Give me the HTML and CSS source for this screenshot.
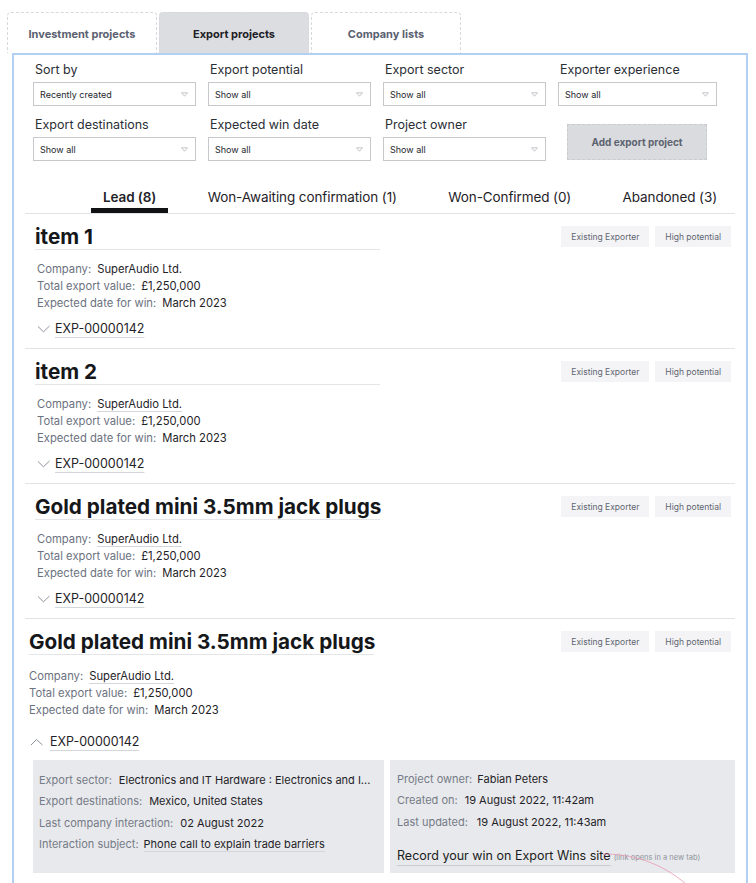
FILE: index.html
```html
<!DOCTYPE html>
<html lang="en">
<head>
<meta charset="utf-8">
<title>Export projects</title>
<link rel="stylesheet" href="styles.css">
</head>
<body>
<div class="page">
  <nav class="top-tabs">
    <a class="top-tab">Investment projects</a>
    <a class="top-tab active">Export projects</a>
    <a class="top-tab">Company lists</a>
  </nav>
  <main class="panel">
    <div class="filters">
      <div class="field">
        <label>Sort by</label>
        <div class="select"><span>Recently created</span><svg class="caret" width="7" height="5" viewBox="0 0 7 5"><path d="M0.5 0.8 H6.5 L3.5 4.2 Z" fill="none" stroke="#b4b7bc" stroke-width="0.8"/></svg></div>
      </div>
      <div class="field">
        <label>Export potential</label>
        <div class="select"><span>Show all</span><svg class="caret" width="7" height="5" viewBox="0 0 7 5"><path d="M0.5 0.8 H6.5 L3.5 4.2 Z" fill="none" stroke="#b4b7bc" stroke-width="0.8"/></svg></div>
      </div>
      <div class="field">
        <label>Export sector</label>
        <div class="select"><span>Show all</span><svg class="caret" width="7" height="5" viewBox="0 0 7 5"><path d="M0.5 0.8 H6.5 L3.5 4.2 Z" fill="none" stroke="#b4b7bc" stroke-width="0.8"/></svg></div>
      </div>
      <div class="field">
        <label>Exporter experience</label>
        <div class="select narrow"><span>Show all</span><svg class="caret" width="7" height="5" viewBox="0 0 7 5"><path d="M0.5 0.8 H6.5 L3.5 4.2 Z" fill="none" stroke="#b4b7bc" stroke-width="0.8"/></svg></div>
      </div>
      <div class="field">
        <label>Export destinations</label>
        <div class="select"><span>Show all</span><svg class="caret" width="7" height="5" viewBox="0 0 7 5"><path d="M0.5 0.8 H6.5 L3.5 4.2 Z" fill="none" stroke="#b4b7bc" stroke-width="0.8"/></svg></div>
      </div>
      <div class="field">
        <label>Expected win date</label>
        <div class="select"><span>Show all</span><svg class="caret" width="7" height="5" viewBox="0 0 7 5"><path d="M0.5 0.8 H6.5 L3.5 4.2 Z" fill="none" stroke="#b4b7bc" stroke-width="0.8"/></svg></div>
      </div>
      <div class="field">
        <label>Project owner</label>
        <div class="select"><span>Show all</span><svg class="caret" width="7" height="5" viewBox="0 0 7 5"><path d="M0.5 0.8 H6.5 L3.5 4.2 Z" fill="none" stroke="#b4b7bc" stroke-width="0.8"/></svg></div>
      </div>
      <div class="field action">
        <button class="add-btn">Add export project</button>
      </div>
    </div>

    <div class="status-tabs">
      <a class="status-tab active">Lead (8)</a>
      <a class="status-tab">Won-Awaiting confirmation (1)</a>
      <a class="status-tab">Won-Confirmed (0)</a>
      <a class="status-tab">Abandoned (3)</a>
    </div>

    <ul class="projects">
      <li class="project">
        <div class="project-head">
          <h2 class="title">item 1</h2>
          <div class="badges"><span class="badge">Existing Exporter</span><span class="badge">High potential</span></div>
        </div>
        <div class="meta">
          <div class="row"><span class="k">Company:</span><span class="v">SuperAudio Ltd.</span></div>
          <div class="row"><span class="k">Total export value:</span><span class="v">£1,250,000</span></div>
          <div class="row"><span class="k">Expected date for win:</span><span class="v">March 2023</span></div>
        </div>
        <div class="toggle">
          <svg width="14" height="8" viewBox="0 0 14 8"><path d="M1 1.5 L6.5 6.8 L12.5 1" fill="none" stroke="#8d929a" stroke-width="1"/></svg>
          <a class="exp">EXP-00000142</a>
        </div>
      </li>

      <li class="project">
        <div class="project-head">
          <h2 class="title">item 2</h2>
          <div class="badges"><span class="badge">Existing Exporter</span><span class="badge">High potential</span></div>
        </div>
        <div class="meta">
          <div class="row"><span class="k">Company:</span><span class="v link">SuperAudio Ltd.</span></div>
          <div class="row"><span class="k">Total export value:</span><span class="v">£1,250,000</span></div>
          <div class="row"><span class="k">Expected date for win:</span><span class="v">March 2023</span></div>
        </div>
        <div class="toggle">
          <svg width="14" height="8" viewBox="0 0 14 8"><path d="M1 1.5 L6.5 6.8 L12.5 1" fill="none" stroke="#8d929a" stroke-width="1"/></svg>
          <a class="exp">EXP-00000142</a>
        </div>
      </li>

      <li class="project">
        <div class="project-head">
          <h2 class="title">Gold plated mini 3.5mm jack plugs</h2>
          <div class="badges"><span class="badge">Existing Exporter</span><span class="badge">High potential</span></div>
        </div>
        <div class="meta">
          <div class="row"><span class="k">Company:</span><span class="v link">SuperAudio Ltd.</span></div>
          <div class="row"><span class="k">Total export value:</span><span class="v">£1,250,000</span></div>
          <div class="row"><span class="k">Expected date for win:</span><span class="v">March 2023</span></div>
        </div>
        <div class="toggle">
          <svg width="14" height="8" viewBox="0 0 14 8"><path d="M1 1.5 L6.5 6.8 L12.5 1" fill="none" stroke="#8d929a" stroke-width="1"/></svg>
          <a class="exp">EXP-00000142</a>
        </div>
      </li>

      <li class="project expanded">
        <div class="project-head">
          <h2 class="title">Gold plated mini 3.5mm jack plugs</h2>
          <div class="badges"><span class="badge">Existing Exporter</span><span class="badge">High potential</span></div>
        </div>
        <div class="meta">
          <div class="row"><span class="k">Company:</span><span class="v link">SuperAudio Ltd.</span></div>
          <div class="row"><span class="k">Total export value:</span><span class="v">£1,250,000</span></div>
          <div class="row"><span class="k">Expected date for win:</span><span class="v">March 2023</span></div>
        </div>
        <div class="toggle">
          <svg width="14" height="8" viewBox="0 0 14 8"><path d="M1 7 L6.5 1.5 L12.5 7" fill="none" stroke="#8d929a" stroke-width="1"/></svg>
          <a class="exp">EXP-00000142</a>
        </div>
        <div class="details">
          <div class="detail-box">
            <div class="drow"><span class="k">Export sector:</span><span class="v">Electronics and IT Hardware : Electronics and I...</span></div>
            <div class="drow"><span class="k">Export destinations:</span><span class="v">Mexico, United States</span></div>
            <div class="drow"><span class="k">Last company interaction:</span><span class="v">02 August 2022</span></div>
            <div class="drow"><span class="k tight">Interaction subject:</span><span class="v link">Phone call to explain trade barriers</span></div>
          </div>
          <div class="detail-box right">
            <div class="drow"><span class="k tight">Project owner:</span><span class="v">Fabian Peters</span></div>
            <div class="drow"><span class="k">Created on:</span><span class="v">19 August 2022, 11:42am</span></div>
            <div class="drow"><span class="k wide">Last updated:</span><span class="v">19 August 2022, 11:43am</span></div>
            <div class="record"><a class="record-link">Record your win on Export Wins site</a><span class="new-tab">(link opens in a new tab)</span></div>
            <svg class="scribble" width="100" height="40" viewBox="0 0 100 40"><path d="M1 3 C30 3 58 11 84 33" fill="none" stroke="#e79bb0" stroke-width="0.8"/></svg>
          </div>
        </div>
      </li>
    </ul>
  </main>
</div>
</body>
</html>
```

FILE: styles.css
```css
* { box-sizing: border-box; }

body {
  margin: 0;
  font-family: Inter, "Noto Sans", "Liberation Sans", sans-serif;
  color: #1f2328;
  background: #ffffff;
}

.page {
  padding: 12px 0 0 7px;
}

/* top tabs */
.top-tabs {
  display: flex;
  gap: 2px;
  height: 41px;
}

.top-tab {
  width: 150px;
  border: 1px dashed #d7d9dd;
  border-bottom: none;
  border-radius: 4px 4px 0 0;
  display: flex;
  align-items: center;
  justify-content: center;
  padding-top: 2px;
  font-size: 11px;
  font-weight: 700;
  color: #5b6170;
}

.top-tab.active {
  background: #dcdde0;
  color: #1d2026;
}

/* panel */
.panel {
  margin-left: 5px;
  width: 736px;
  border: 2px solid #b3d0f2;
  border-bottom: none;
  padding: 7px 11px 0 11px;
}

/* filters */
.filters {
  display: grid;
  grid-template-columns: repeat(4, 163px);
  column-gap: 12px;
  row-gap: 11px;
  padding-left: 8px;
}

.field label {
  display: block;
  margin: 0 0 4px 2px;
  font-size: 12.5px;
  line-height: 16px;
  color: #2a2e35;
}

.select {
  height: 24px;
  border: 1px solid #c6c8cc;
  background: #fff;
  display: flex;
  align-items: center;
  justify-content: space-between;
  padding: 0 7px 0 6px;
  font-size: 9px;
  color: #25282d;
}

.select.narrow {
  width: 159px;
}

.field.action {
  display: flex;
  align-items: flex-end;
  padding: 0 0 1px 9px;
}

.add-btn {
  width: 140px;
  height: 36px;
  border: 1px dashed #c9cbcf;
  background: #dadbde;
  font-family: inherit;
  font-size: 10px;
  font-weight: 700;
  color: #5d6370;
  padding: 0;
}

/* status tabs */
.status-tabs {
  display: flex;
  justify-content: space-between;
  margin-top: 27px;
  padding: 0 6px 0 66px;
  border-bottom: 1px solid #e2e3e6;
}

.status-tab {
  padding: 1px 12px 3px;
  border-bottom: 5px solid transparent;
  font-size: 13.5px;
  line-height: 16px;
  letter-spacing: -0.1px;
  color: #1f2328;
}

.status-tab.active {
  border-bottom-color: #111214;
  font-weight: 600;
}

/* projects */
.projects {
  list-style: none;
  margin: 0;
  padding: 0;
}

.project {
  padding: 12px 4px 11px 10px;
  border-bottom: 1px solid #e2e3e6;
}

.project-head {
  display: flex;
  justify-content: space-between;
  align-items: flex-start;
}

.title {
  margin: 0;
  width: 345px;
  font-size: 20.7px;
  line-height: 21px;
  font-weight: 700;
  padding-bottom: 2px;
  border-bottom: 1px solid #e3e5e9;
  color: #15171a;
  white-space: nowrap;
}

.badges {
  display: flex;
  gap: 6px;
}

.badge {
  height: 21px;
  padding: 0 10px;
  background: #f4f4f6;
  display: flex;
  align-items: center;
  font-size: 8.5px;
  color: #5f6571;
}

.meta {
  margin: 11px 0 0 2px;
  font-size: 11.25px;
  line-height: 17px;
}

.k {
  color: #6c7280;
  margin-right: 6px;
}

.v {
  color: #1f2328;
}

.link {
  text-decoration: underline;
  text-decoration-color: #d3d6db;
  text-underline-offset: 3px;
}

.toggle {
  display: flex;
  align-items: center;
  gap: 4px;
  margin-top: 9px;
  margin-left: 2px;
}

.exp {
  font-size: 12.5px;
  line-height: 16px;
  color: #1f2328;
  text-decoration: underline;
  text-decoration-color: #d3d6db;
  text-underline-offset: 4px;
}

/* expanded */
.project.expanded {
  padding-left: 4px;
  padding-top: 12px;
  border-bottom: none;
}

.expanded .meta {
  margin-top: 13px;
  margin-left: 0;
}

.expanded .toggle {
  margin-top: 15px;
  margin-left: 1px;
  gap: 6px;
}

.details {
  display: grid;
  grid-template-columns: 351px 345px;
  column-gap: 6px;
  margin: 10px -4px 0 4px;
}

.detail-box {
  position: relative;
  background: #e8e9ec;
  height: 113px;
  padding: 10px 6px 0 6px;
  font-size: 11px;
}

.detail-box.right {
  padding-left: 7px;
  padding-top: 9px;
}

.drow {
  line-height: 21.33px;
  white-space: nowrap;
}

.drow .k {
  color: #757b87;
  margin-right: 7px;
}

.drow .k.tight {
  margin-right: 5px;
}

.drow .k.wide {
  margin-right: 9px;
}

.record {
  margin-top: 14px;
  display: flex;
  align-items: baseline;
  gap: 3px;
  white-space: nowrap;
}

.record-link {
  font-size: 12.5px;
  line-height: 18px;
  color: #1a1c20;
  text-decoration: underline;
  text-decoration-color: #c9ccd1;
  text-underline-offset: 5px;
}

.new-tab {
  font-size: 7.5px;
  color: #8f949c;
}

.scribble {
  position: absolute;
  left: 212px;
  top: 91px;
  overflow: visible;
}
```
